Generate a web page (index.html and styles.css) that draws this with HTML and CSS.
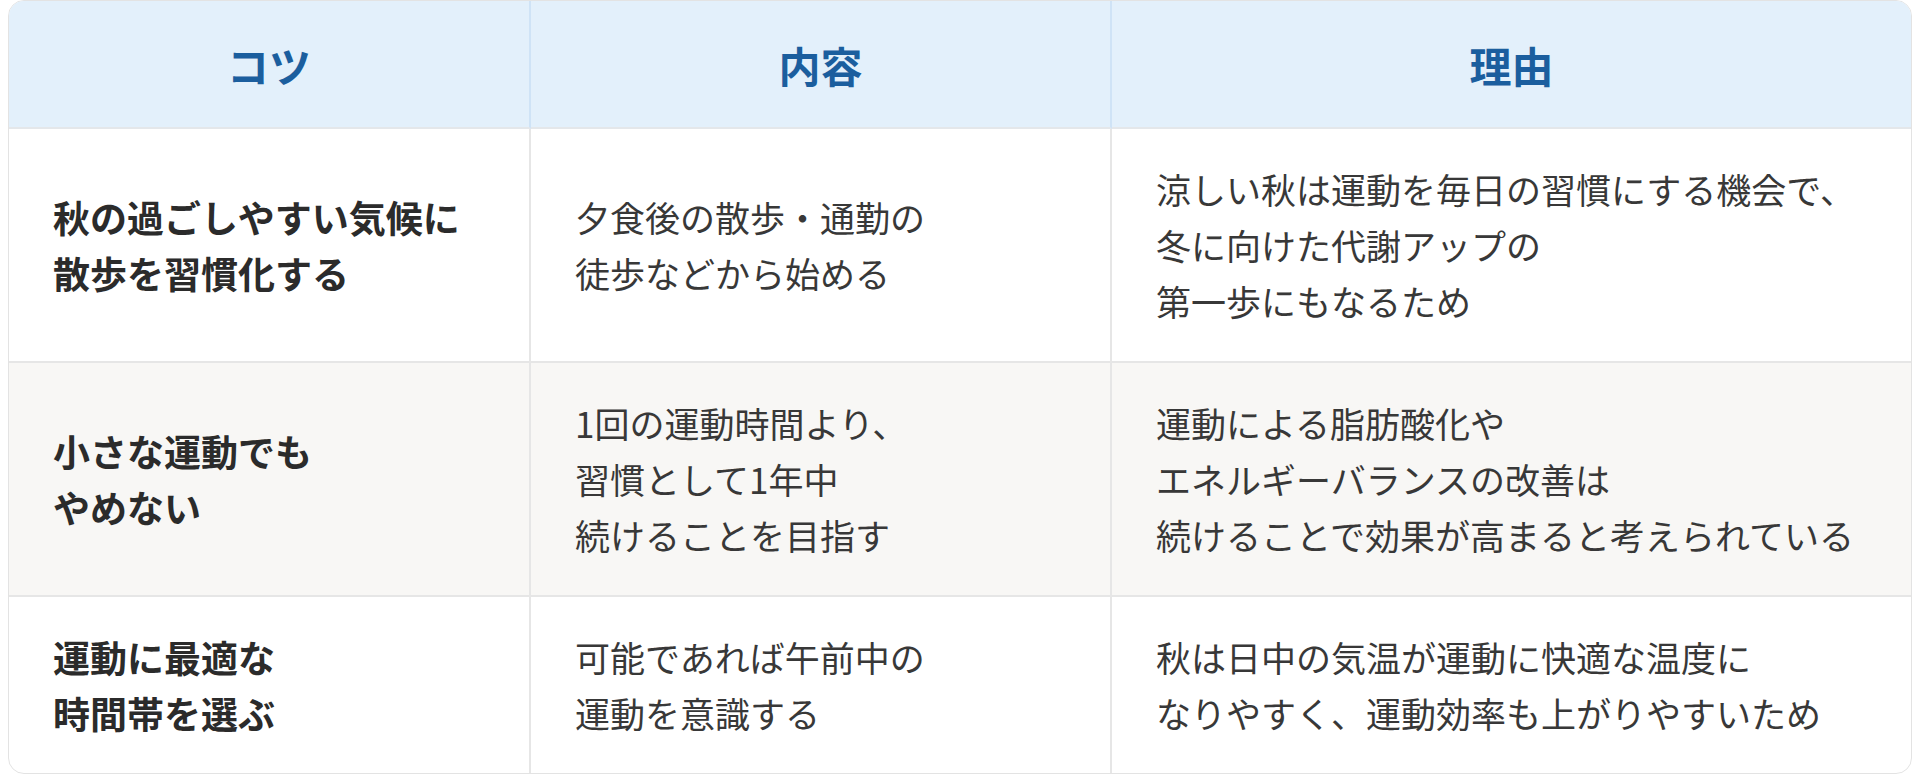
FILE: index.html
```html
<!DOCTYPE html>
<html lang="ja">
<head>
<meta charset="utf-8">
<title>秋の運動のコツ</title>
<link rel="stylesheet" href="styles.css">
</head>
<body>
<div class="table-wrap">
  <div class="grid" role="table">
    <div class="cell head" role="columnheader">コツ</div>
    <div class="cell head" role="columnheader">内容</div>
    <div class="cell head last-col" role="columnheader">理由</div>

    <div class="cell tip" role="cell">秋の過ごしやすい気候に<br>散歩を習慣化する</div>
    <div class="cell body" role="cell">夕食後の散歩・通勤の<br>徒歩などから始める</div>
    <div class="cell body last-col" role="cell">涼しい秋は運動を毎日の習慣にする機会で、<br>冬に向けた代謝アップの<br>第一歩にもなるため</div>

    <div class="cell tip alt" role="cell">小さな運動でも<br>やめない</div>
    <div class="cell body alt" role="cell">1回の運動時間より、<br>習慣として1年中<br>続けることを目指す</div>
    <div class="cell body alt last-col" role="cell">運動による脂肪酸化や<br>エネルギーバランスの改善は<br>続けることで効果が高まると考えられている</div>

    <div class="cell tip last-row" role="cell">運動に最適な<br>時間帯を選ぶ</div>
    <div class="cell body last-row" role="cell">可能であれば午前中の<br>運動を意識する</div>
    <div class="cell body last-row last-col" role="cell">秋は日中の気温が運動に快適な温度に<br>なりやすく、運動効率も上がりやすいため</div>
  </div>
</div>
</body>
</html>
```

FILE: styles.css
```css
html, body {
  margin: 0;
  padding: 0;
  background: #ffffff;
}

body {
  padding: 0 8px;
  font-family: "Noto Sans CJK JP", "Noto Sans", sans-serif;
  color: #333333;
}

.table-wrap {
  border: 1px solid #e3e3e3;
  border-radius: 16px;
  overflow: hidden;
  background: #ffffff;
}

.grid {
  display: grid;
  grid-template-columns: 522px 581px 1fr;
}

.cell {
  box-sizing: border-box;
  display: flex;
  align-items: center;
  padding: 32px 44px;
  border-right: 2px solid #e6e6e6;
  border-bottom: 2px solid #e6e6e6;
  font-size: 35px;
  line-height: 56px;
}

.last-col {
  border-right: none;
}

.last-row {
  border-bottom: none;
}

.head {
  justify-content: center;
  background: #e3f0fb;
  color: #1b5e9e;
  font-weight: 700;
  font-size: 42px;
  line-height: 63px;
  padding: 32px 44px 31px;
  border-right-color: #cfe3f6;
  border-bottom-color: #e4e7ea;
}

.head.last-col {
  border-right: none;
}

.tip {
  font-weight: 700;
  font-size: 37px;
  color: #2b2b2b;
}

.body {
  font-weight: 400;
  color: #383838;
}

.alt {
  background: #f8f7f5;
}
```
